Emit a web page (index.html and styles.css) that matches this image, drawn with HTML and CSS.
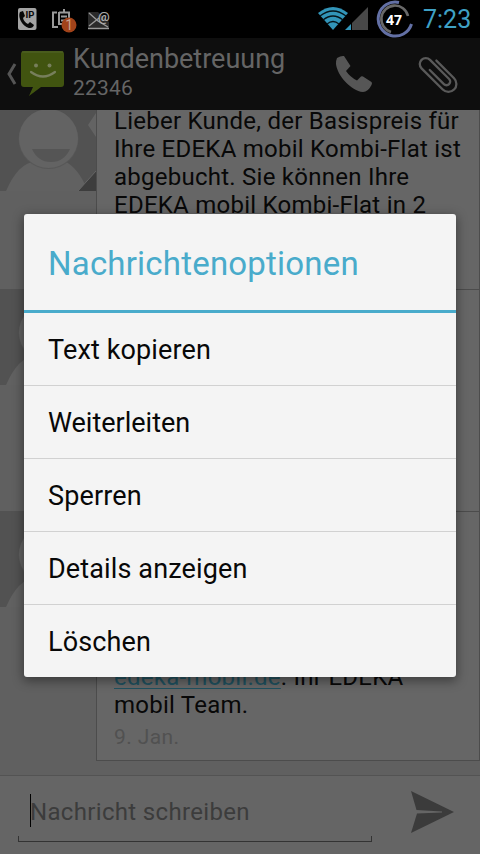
FILE: index.html
```html
<!DOCTYPE html>
<html lang="de">
<head>
<meta charset="utf-8">
<title>Kundenbetreuung</title>
<link rel="stylesheet" href="styles.css">
</head>
<body>
<svg width="0" height="0" class="defs">
  <symbol id="person" viewBox="0 0 96 96">
    <rect width="96" height="96" fill="#525252"/>
    <path d="M6 96Q18 68 36 66H64Q78 72 88 96Z" fill="#616161"/>
    <circle cx="48.500" cy="44" r="30" fill="#575757"/>
    <circle cx="48.500" cy="43.500" r="29.500" fill="#636363"/>
    <path d="M32 54H70Q64 67 51 67T32 54Z" fill="#555"/>
    <path d="M78 96L96 76V96Z" fill="#3d3d3d"/>
    <path d="M78 96L96 76" stroke="#666"/>
    <path d="M96 18L88 30L96 42Z" fill="#636363"/>
  </symbol>
</svg>
<main class="phone">
  <header class="status">
    <svg class="status-left" width="120" height="38" viewBox="0 0 120 38">
      <rect x="18" y="8" width="18.500" height="22" rx="2" fill="#a3a3a3"/>
      <path d="M20 12L23 11L25 16L23 18Q24 22 28 24L30 22L34 25Q33 28 30 28C24 28 17 18 20 12Z" fill="#080808"/>
      <text x="25.500" y="18" class="ip">IP</text>
      <path d="M57 12.500H53V27H58M59 12.500H69V20M64 9V12M59 12V24H63M61 16.500H67M61 20.500H66" fill="none" stroke="#999" stroke-width="2"/>
      <circle cx="69" cy="25" r="7.500" fill="#a2431a"/>
      <text x="65.200" y="30" class="count">1</text>
      <path d="M88 12H98L109 22V28H88Z" fill="#2a2a2a"/>
      <path d="M89 13L98 21L108 27M89 26L99 18M88 28.500H109" fill="none" stroke="#999" stroke-width="1.400"/>
      <text x="98" y="20.500" class="at">@</text>
    </svg>
    <svg class="status-right" width="103" height="38" viewBox="0 0 103 38">
      <path d="M1 13Q16 1 31 13L16 30Z" fill="#3295b9"/>
      <path d="M3 16Q16 6 29 16M6 20Q16 12 26 20M10 24Q16 19 22 24" fill="none" stroke="#05141a" stroke-width="1.300"/>
      <path d="M28 30L34 24V30Z" fill="#3295b9"/>
      <path d="M35 30V23L51 7V30Z" fill="#484848"/>
      <path d="M82 2.500A17 17 0 1 0 94.500 24" fill="none" stroke="#6370a5" stroke-width="3"/>
      <path d="M91 16A13.500 13.500 0 1 0 74 32" fill="none" stroke="#696969" stroke-width="2.600"/>
      <text x="69" y="25" class="battery">47</text>
    </svg>
    <time class="clock">7:23</time>
  </header>
  <section class="bar">
    <svg width="68" height="72" viewBox="0 38 68 72">
      <path d="M15 64L9 74L15 84" fill="none" stroke="#555" stroke-width="3"/>
      <path d="M24 51H61Q64 51 64 54V84Q64 87 61 87H41L29 96L33 87H24Q21 87 21 84V54Q21 51 24 51Z" fill="#415410"/>
      <path d="M22 52H63" stroke="#53652a"/>
      <circle cx="36" cy="65.500" r="2" fill="#777f5c"/><circle cx="49.500" cy="65.500" r="2" fill="#777f5c"/>
      <path d="M31 72Q43 81 55 72" fill="none" stroke="#777f5c" stroke-width="2.200" stroke-linecap="round"/>
    </svg>
    <div class="contact"><h1 class="name">Kundenbetreuung</h1><p class="number">22346</p></div>
    <svg class="actions" width="154" height="72" viewBox="326 38 154 72">
      <path d="M337 58Q341 55.500 344 56L350.500 66L346 71Q350 77 357 80.500L361 76.500Q362 76 363 76.500L371.500 82Q372.500 83 371.500 85Q368 92 363 92C351 91 337 75 336 64Q336 60 337 58Z" fill="#565656"/>
      <path d="M-11 -8H14A8 8 0 0 1 14 8H-16A6 6 0 0 1 -16 -4H11A3.700 3.700 0 0 1 11 3.400H-9" transform="translate(438.500 74) rotate(45)" fill="none" stroke="#595959" stroke-width="2.300" stroke-linecap="round"/>
    </svg>
  </section>
  <section class="thread">
    <article class="message first">
      <svg class="avatar" width="96" height="96"><use href="#person"/></svg>
      <div class="bubble"><p class="text">Lieber Kunde, der Basispreis für<br>Ihre EDEKA mobil Kombi-Flat ist<br>abgebucht. Sie können Ihre<br>EDEKA mobil Kombi-Flat in 2</p></div>
    </article>
    <article class="message second">
      <svg class="avatar" width="96" height="96"><use href="#person"/></svg>
      <div class="bubble"></div>
    </article>
    <article class="message third">
      <svg class="avatar" width="96" height="96"><use href="#person"/></svg>
      <div class="bubble"><p class="text"><span class="link">edeka-mobil.de</span>. Ihr EDEKA<br>mobil Team.</p><p class="date">9. Jan.</p></div>
    </article>
  </section>
  <footer class="compose">
    <div class="field"><span class="caret"></span><span class="hint">Nachricht schreiben</span></div>
    <svg class="send" width="44" height="42" viewBox="0 0 44 42"><path d="M0 0L43 21L0 42L6 22.500L31 21.500V20.500L5.500 19Z" fill="#3b3b3b"/></svg>
  </footer>
  <section class="dialog">
    <h2 class="title">Nachrichtenoptionen</h2>
    <ul class="options">
      <li class="option">Text kopieren</li>
      <li class="option">Weiterleiten</li>
      <li class="option">Sperren</li>
      <li class="option">Details anzeigen</li>
      <li class="option">Löschen</li>
    </ul>
  </section>
</main>
</body>
</html>
```
FILE: styles.css
```css
* { box-sizing: border-box; margin: 0; padding: 0; }
body { font-family: Roboto, sans-serif; background: #626262; }
.defs { position: absolute; }
svg { display: block; flex: none; }
.phone { position: relative; width: 480px; height: 854px; overflow: hidden; display: flex; flex-direction: column; background: #606060; }
.status { height: 38px; flex: none; display: flex; background: #000; }
.status-right { margin-left: 197px; }
.clock { margin-left: 3px; font-size: 25px; line-height: 40px; letter-spacing: 0; color: #3fa1c5; }
.ip { font: bold 9.500px Roboto, sans-serif; fill: #080808; }
.count { font: 14px Roboto, sans-serif; fill: #c9a28f; }
.at { font: bold 13px Roboto, sans-serif; fill: #aaa; }
.battery { font: bold 14px "Open Sans", sans-serif; fill: #fff; }
.bar { position: relative; z-index: 1; height: 72px; flex: none; display: flex; background: #0e0e0e; }
.contact { margin-left: 5px; width: 253px; padding-top: 5px; color: #656565; white-space: nowrap; }
.name { font-size: 27px; line-height: 32px; font-weight: 400; }
.number { font-size: 21px; line-height: 27px; letter-spacing: .2px; }
.thread { height: 665px; flex: none; display: flex; flex-direction: column; }
.message { display: flex; flex: none; }
.first { height: 194px; margin-top: -15px; }
.second { height: 222px; }
.third { height: 250px; }
.bubble { width: 384px; padding: 11px 0 0 17px; background: #666; border: 1px solid #4c4c4c; white-space: nowrap; }
.first .bubble { border-bottom: 0; }
.second .bubble { border-bottom: 0; }
.third .bubble { display: flex; flex-direction: column; justify-content: flex-end; padding-bottom: 9px; }
.text { font-size: 24px; line-height: 28px; letter-spacing: .25px; color: #080808; }
.link { color: #1f515f; text-decoration: underline; text-decoration-thickness: 1px; text-underline-offset: 3px; }
.date { font-size: 21px; line-height: 28px; padding-top: 4px; letter-spacing: .4px; color: #515151; }
.compose { height: 79px; flex: none; display: flex; background: #656565; border-top: 1px solid #535353; }
.field { width: 354px; height: 48px; margin: 18px 0 0 18px; padding-left: 11px; display: flex; border-style: solid; border-width: 0 1px 1px; border-image: linear-gradient(to top, #333 6px, transparent 6px) 1; }
.caret { width: 1px; height: 33px; background: #000; }
.hint { margin-left: -1px; font-size: 24px; line-height: 37px; letter-spacing: .33px; color: #3c3c3c; white-space: nowrap; }
.send { margin: 15px 0 0 39px; }
.dialog { position: absolute; z-index: 2; left: 24px; top: 214px; width: 432px; height: 463px; background: #f4f4f4; border-radius: 3px; box-shadow: 0 3px 11px 1px rgba(0,0,0,.4); white-space: nowrap; }
.title { height: 99px; padding-left: 24px; font-size: 33px; font-weight: 400; line-height: 100px; letter-spacing: .2px; color: #49abcb; border-bottom: 3px solid #49abcb; }
.options { list-style: none; }
.option { height: 73px; padding-left: 24px; font-size: 27px; line-height: 75px; letter-spacing: .13px; color: #080808; border-bottom: 1px solid #d1d1d1; }
.option:nth-child(2) { letter-spacing: 0; }
.option:last-child { border: 0; }
```
